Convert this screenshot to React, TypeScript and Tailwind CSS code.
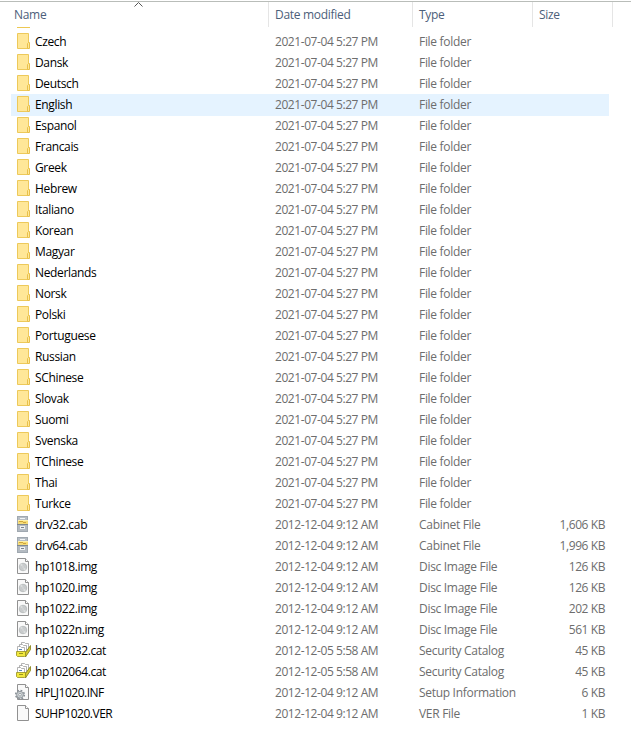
import { useState } from 'react';
import clsx from 'clsx';

type FileKind = 'folder' | 'cab' | 'img' | 'cat' | 'inf' | 'ver';

interface FileEntry {
  name: string;
  date: string;
  kind: FileKind;
  size?: string;
}

const TYPE_LABELS: Record<FileKind, string> = {
  folder: 'File folder',
  cab: 'Cabinet File',
  img: 'Disc Image File',
  cat: 'Security Catalog',
  inf: 'Setup Information',
  ver: 'VER File',
};

const folderNames = [
  'Czech', 'Dansk', 'Deutsch', 'English', 'Espanol', 'Francais', 'Greek', 'Hebrew',
  'Italiano', 'Korean', 'Magyar', 'Nederlands', 'Norsk', 'Polski', 'Portuguese', 'Russian',
  'SChinese', 'Slovak', 'Suomi', 'Svenska', 'TChinese', 'Thai', 'Turkce',
];

const entries: FileEntry[] = [
  ...folderNames.map((name): FileEntry => ({ name, date: '2021-07-04 5:27 PM', kind: 'folder' })),
  { name: 'drv32.cab', date: '2012-12-04 9:12 AM', kind: 'cab', size: '1,606 KB' },
  { name: 'drv64.cab', date: '2012-12-04 9:12 AM', kind: 'cab', size: '1,996 KB' },
  { name: 'hp1018.img', date: '2012-12-04 9:12 AM', kind: 'img', size: '126 KB' },
  { name: 'hp1020.img', date: '2012-12-04 9:12 AM', kind: 'img', size: '126 KB' },
  { name: 'hp1022.img', date: '2012-12-04 9:12 AM', kind: 'img', size: '202 KB' },
  { name: 'hp1022n.img', date: '2012-12-04 9:12 AM', kind: 'img', size: '561 KB' },
  { name: 'hp102032.cat', date: '2012-12-05 5:58 AM', kind: 'cat', size: '45 KB' },
  { name: 'hp102064.cat', date: '2012-12-05 5:58 AM', kind: 'cat', size: '45 KB' },
  { name: 'HPLJ1020.INF', date: '2012-12-04 9:12 AM', kind: 'inf', size: '6 KB' },
  { name: 'SUHP1020.VER', date: '2012-12-04 9:12 AM', kind: 'ver', size: '1 KB' },
];

function Page() {
  return (
    <>
      <path d="M3.5 .5h8l3 3v12h-11z" fill="#f9f9f9" stroke="#919191" />
      <path d="M11.5 .5v3h3" fill="#fff" stroke="#919191" />
    </>
  );
}

function FileIcon({ kind }: { kind: FileKind }) {
  return (
    <svg width="18" height="16" viewBox="0 0 18 16" className="mt-0.5 shrink-0">
      {kind === 'folder' && (
        <>
          <path d="M3.5 .5h11v15h-11z" fill="#ffe798" stroke="#edc95a" />
          <path d="M13.5 15.5v-5l1-1h1v6z" fill="#ffe798" stroke="#e8c04a" />
        </>
      )}
      {kind === 'cab' && (
        <>
          <path d="M3 0h11v16H3z" fill="#a0a8b0" />
          <path d="M4 1h9v3H4z" fill="#b7bec5" />
          <path d="M6 2.5h5" stroke="#f2f4f5" />
          <path d="M4 4h10v4H4z" fill="#f5db78" />
          <path d="M4 4h10v1H4z" fill="#fff0a8" />
          <path d="M5 5.5h4M9 6.5h3" stroke="#cfa63a" />
          <path d="M3 8.5h11" stroke="#7f8890" />
          <path d="M4 9h9v6H4z" fill="#b3bac1" />
          <path d="M6 10h5v3H6z" fill="#eef0f2" />
          <path d="M7 11.5h3" stroke="#7b838b" />
        </>
      )}
      {kind === 'img' && (
        <>
          <Page />
          <circle cx="9" cy="9" r="3.8" fill="#c9cccd" stroke="#adb1b3" strokeWidth=".7" />
          <path d="M9 9L6 7a3.5 3.5 0 0 1 2-1.5zM9 9l3 2a3.5 3.5 0 0 1-2 1.5z" fill="#dcdfdf" />
          <circle cx="9" cy="9" r="1" fill="#e9e9e9" stroke="#b9bdbf" strokeWidth=".5" />
        </>
      )}
      {kind === 'cat' && (
        <>
          <path d="M7.5 .5h3l1 1h3v6h-7z" fill="#fff" stroke="#a0a0a0" strokeWidth=".8" />
          <path d="M5.5 2.5h3l1 1h3v6h-7z" fill="#fff" stroke="#a0a0a0" strokeWidth=".8" />
          <path d="M3.5 4.5h3l1 1h3v5h-7z" fill="#fff" stroke="#a0a0a0" strokeWidth=".8" />
          <path d="M5 7.5h3" stroke="#5687b8" />
          <path d="M11.5 10.5l5-7v4l-5 7.5z" fill="#d3c92e" stroke="#827d1b" strokeWidth=".8" />
          <path d="M2.5 9.5h9v4l-1 1h-7l-1-1z" fill="#f1e83d" stroke="#958f21" strokeWidth=".8" />
          <path d="M5 11.5h4" stroke="#999320" />
        </>
      )}
      {kind === 'inf' && (
        <>
          <Page />
          <circle cx="6" cy="10.7" r="4.2" fill="none" stroke="#899096" strokeWidth="1.8" strokeDasharray="1.75 1.55" />
          <circle cx="6" cy="10.7" r="3.4" fill="#cbd0d3" stroke="#8e959a" strokeWidth=".9" />
          <circle cx="6" cy="10.7" r="1.3" fill="#fff" stroke="#8e959a" strokeWidth=".8" />
        </>
      )}
      {kind === 'ver' && <Page />}
    </svg>
  );
}

export default function App() {
  const [hovered, setHovered] = useState('English');

  return (
    <div className="h-[732px] w-[631px] overflow-hidden bg-white font-['Open_Sans','Noto_Sans',sans-serif] text-[12px] tracking-[-0.3px] text-[#6d6d6d]">
      <div className="h-px" />
      <div className="relative flex h-[26px] border-t border-[#b9bdb9] leading-[26px] text-[#4c607a]">
        <div className="w-[269px] border-r border-[#e5e5e5] pl-[14px]">Name</div>
        <div className="w-36 border-r border-[#e5e5e5] pl-1.5">Date modified</div>
        <div className="w-30 border-r border-[#e5e5e5] pl-1.5">Type</div>
        <div className="w-20 border-r border-[#e5e5e5] pl-1.5">Size</div>
        <svg width="9" height="5" viewBox="0 0 9 5" className="absolute left-[134px] top-0">
          <path d="M.5 4.5l4-4 4 4" fill="none" stroke="#555" />
        </svg>
      </div>

      {/* bottom edge of the row scrolled under the header */}
      <div className="h-1 pl-[17px]">
        <div className="h-px w-[13px] bg-[#edc852]" />
      </div>

      {entries.map((entry) => (
        <div
          key={entry.name}
          onMouseEnter={() => setHovered(entry.name)}
          className={clsx(
            'ml-[11px] flex h-[21px] w-[598px] whitespace-nowrap leading-[22px]',
            hovered === entry.name && 'bg-[#e5f3ff] shadow-[0_1px_0_#e5f3ff]'
          )}
        >
          <div className="flex w-[264px] items-start pl-[3px]">
            <FileIcon kind={entry.kind} />
            <span
              className={clsx(
                'ml-[3px] text-black',
                entry.kind === 'folder' && 'tracking-[-0.35px]',
                (entry.kind === 'inf' || entry.kind === 'ver') && 'tracking-[-0.5px]',
                (entry.kind === 'img' || entry.kind === 'cat') && 'tracking-[-0.4px]'
              )}
            >
              {entry.name}
            </span>
          </div>
          <div className="w-36 tracking-[-0.43px]">{entry.date}</div>
          <div className="w-[116px]">{TYPE_LABELS[entry.kind]}</div>
          <div className="flex-1 pr-1 text-right tracking-[-0.42px]">{entry.size}</div>
        </div>
      ))}
    </div>
  );
}
